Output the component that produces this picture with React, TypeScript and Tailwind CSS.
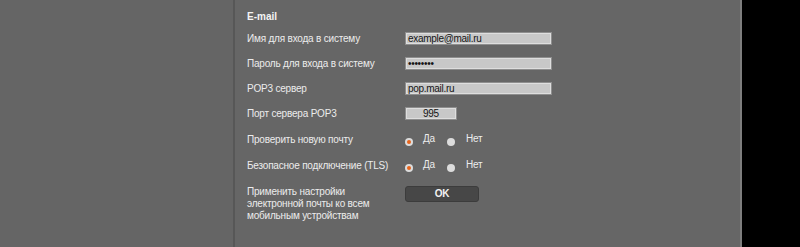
import React from "react";

function Radio({ checked }: { checked: boolean }) {
  return (
    <span className="w-[8px] h-[8px] rounded-full bg-[#dcdcdc] flex items-center justify-center mt-[6px]">
      {checked && <span className="w-[4px] h-[4px] rounded-full bg-[#e8641b]" />}
    </span>
  );
}

function TextInput({ value, w, center }: { value: string; w: string; center?: boolean }) {
  return (
    <div
      className={`${w} h-[13px] bg-[#c8c8c8] border border-[#8e8e8e] shadow-[inset_0_0_0_1px_#dedede] text-[10px] leading-[11px] tracking-[-0.3px] text-[#151515] flex items-center px-[2px] ${center ? "justify-center" : ""}`}
    >
      {value}
    </div>
  );
}

function RadioPair() {
  return (
    <div className="flex items-start">
      <Radio checked />
      <span className="ml-[10px] text-[10px] text-[#ececec] mt-[-1px]">Да</span>
      <span className="ml-[12px]">
        <Radio checked={false} />
      </span>
      <span className="ml-[11px] text-[10px] text-[#ececec] mt-[-1px]">Нет</span>
    </div>
  );
}

export default function App() {
  const font = { fontFamily: '"Liberation Sans", Arial, sans-serif' };
  return (
    <div className="w-[800px] h-[247px] flex bg-[#666666] overflow-hidden" style={font}>
      <div className="w-[235px] shrink-0 h-full bg-[#656565] border-r-2 border-[#575757]" />
      <div className="w-[505px] shrink-0 h-full bg-[#666666] pl-[12px] pt-[11px]">
        <div className="h-[12px] text-[10px] leading-[12px] font-bold text-[#f4f4f4]">E-mail</div>
        <div className="mt-[3px] grid grid-cols-[158px_1fr] text-[10px] tracking-[-0.2px] text-[#ececec] whitespace-nowrap">
          <div className="h-[25px] flex items-center">Имя для входа в систему</div>
          <div className="h-[25px] flex items-center">
            <TextInput value="example@mail.ru" w="w-[147px]" />
          </div>
          <div className="h-[25px] flex items-center">Пароль для входа в систему</div>
          <div className="h-[25px] flex items-center">
            <TextInput value="••••••••" w="w-[147px]" />
          </div>
          <div className="h-[25px] flex items-center">POP3 сервер</div>
          <div className="h-[25px] flex items-center">
            <TextInput value="pop.mail.ru" w="w-[147px]" />
          </div>
          <div className="h-[25px] flex items-center">Порт сервера POP3</div>
          <div className="h-[25px] flex items-center">
            <TextInput value="995" w="w-[52px]" center />
          </div>
          <div className="h-[26px] flex items-center">Проверить новую почту</div>
          <div className="h-[26px] flex items-center">
            <RadioPair />
          </div>
          <div className="h-[26px] flex items-center">Безопасное подключение (TLS)</div>
          <div className="h-[26px] flex items-center">
            <RadioPair />
          </div>
          <div className="pt-[8px] leading-[12px]">
            Применить настройки
            <br />
            электронной почты ко всем
            <br />
            мобильным устройствам
          </div>
          <div className="pt-[8px]">
            <button className="w-[74px] h-[16px] rounded-[3px] bg-[#474747] border border-[#3c3c3c] text-[10px] leading-[14px] font-bold text-[#f2f2f2]">
              OK
            </button>
          </div>
        </div>
      </div>
      <div className="w-[2px] shrink-0 h-full bg-[#7e7e7e]" />
      <div className="flex-1 h-full bg-black" />
    </div>
  );
}
